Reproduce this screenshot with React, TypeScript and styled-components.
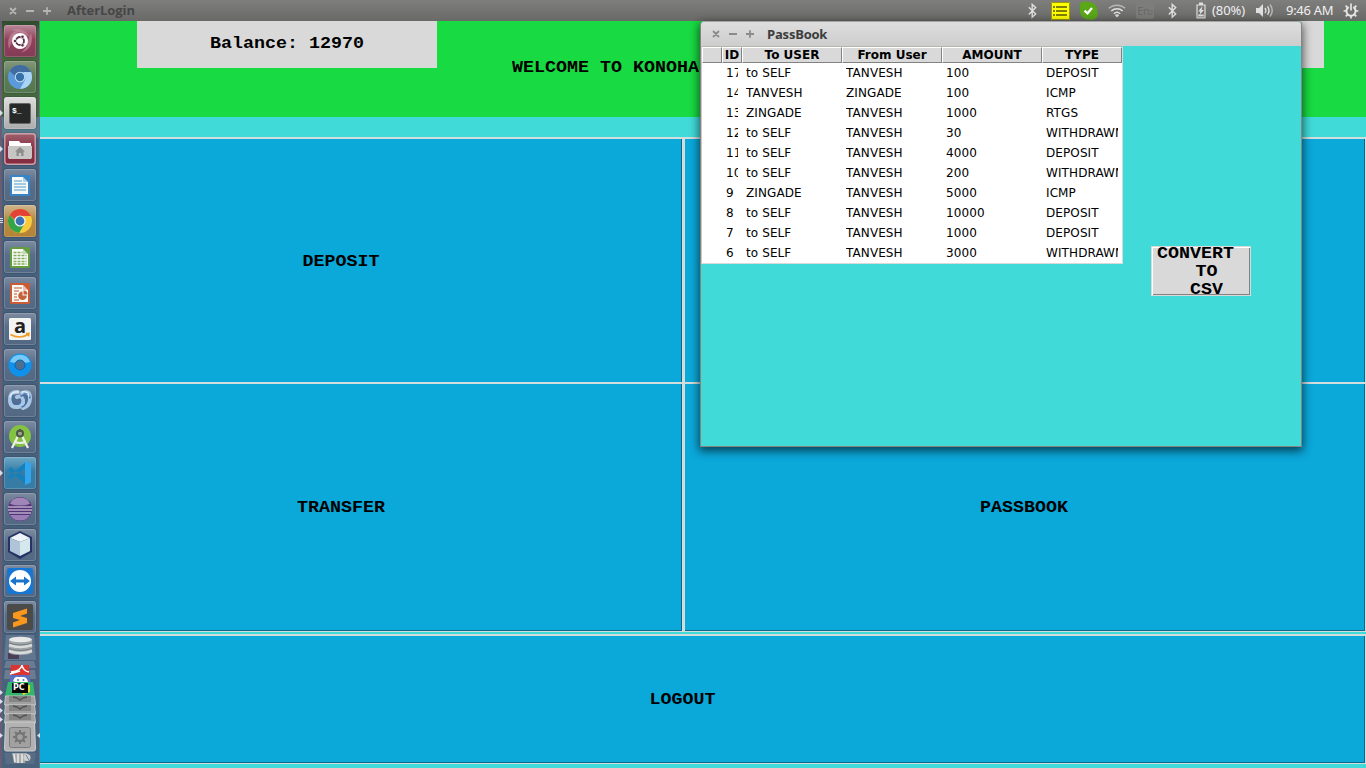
import React from 'react';
import styled, { createGlobalStyle } from 'styled-components';

const GlobalStyle = createGlobalStyle`
  * { box-sizing: border-box; }
  html, body { margin: 0; padding: 0; overflow: hidden; }
`;

const Desktop = styled.div`
  position: relative;
  width: 1366px;
  height: 768px;
  overflow: hidden;
  display: flex;
  flex-direction: column;
  background: #40dad8;
  color: #000;
`;

/* ---------- top panel ---------- */

const Panel = styled.header`
  height: 21px;
  flex: none;
  display: flex;
  align-items: center;
  background: linear-gradient(#7e7e7d, #696968);
`;

const Controls = styled.div<{ $color: string }>`
  display: flex;
  flex: none;
  color: ${(p) => p.$color};
`;

const PanelTitle = styled.div`
  margin-left: 16px;
  width: 961px;
  font: bold 13px/21px 'Open Sans', 'Noto Sans', sans-serif;
  color: #464646;
  letter-spacing: -0.05px;
`;

const Slot = styled.div<{ $w: number }>`
  width: ${(p) => p.$w}px;
  height: 21px;
  flex: none;
  display: flex;
  align-items: center;
  color: #dfdfdf;
`;

const PanelText = styled.div<{ $w: number; $spacing: number }>`
  width: ${(p) => p.$w}px;
  flex: none;
  white-space: nowrap;
  font: 13px/21px 'Noto Sans', 'Open Sans', sans-serif;
  letter-spacing: ${(p) => p.$spacing}px;
  color: #f0f0f0;
`;

function WindowControls({ color }: { color: string }) {
  return (
    <Controls $color={color}>
      <svg width="42" height="10" viewBox="0 0 42 10" fill="none" stroke="currentColor" strokeWidth="1.8">
        <path d="M1 2l6 6M7 2l-6 6M17 5h8M34 5h8M38 1.2v7.6" />
      </svg>
    </Controls>
  );
}

function Bluetooth() {
  return (
    <svg width="9" height="16" viewBox="0 0 9 16" fill="none" stroke="currentColor" strokeWidth="1.4">
      <path d="M.8 4.3l6.9 6.6-3.5 3.3V1.4l3.5 3.2L.8 11.4" />
    </svg>
  );
}

const InputSource = styled.span`
  width: 18px;
  height: 17px;
  border-radius: 2px;
  background: #7d7d7c;
  color: #686868;
  font: 11px/17px 'Noto Sans', sans-serif;
  text-align: center;
  white-space: nowrap;
  letter-spacing: -0.5px;
  small { font-size: 7px; }
`;

function Indicators() {
  return (
    <>
      <Slot $w={23}><Bluetooth /></Slot>
      <Slot $w={28}>
        <svg width="19" height="18" viewBox="0 0 19 18">
          <path fill="#ffff00" d="M0 0h19v18H0z" />
          <path fill="none" stroke="#9a9a10" d="M.5.5h18v17H.5z" />
          <path stroke="#55550a" strokeWidth="1.6" d="M2 5h2M5 5h11M2 9h2M5 9h11M2 13h2M5 13h11" />
        </svg>
      </Slot>
      <Slot $w={29}>
        <svg width="19" height="19" viewBox="0 0 19 19">
          <path fill="#5aa718" d="M4 .5c2-1 4 .4 6 .4 5 0 8.500 4 8.300 8.400 0 2 1 4-.1 6.200-1.700 3.500-5 4-8 3C5 19 1 15 1 10 1 7-1 3 4 .5z" />
          <path fill="none" stroke="#fff" strokeWidth="2.2" d="M5.500 9.600l3 2.700L13 7" />
        </svg>
      </Slot>
      <Slot $w={28}>
        <svg width="18" height="15" viewBox="0 0 18 15" fill="none" stroke="currentColor" strokeWidth="1.5">
          <path opacity=".6" d="M.8 5.300c4.500-4.200 11.900-4.200 16.400 0" />
          <path d="M3.300 8c3.300-3 8.100-3 11.400 0" />
          <path d="M5.800 10.700c1.900-1.700 4.500-1.700 6.400 0" />
          <path fill="currentColor" stroke="none" d="M6.800 12.100q2.200-1.500 4.400 0L9 14.500z" />
        </svg>
      </Slot>
      <Slot $w={32}><InputSource>En<small>2</small></InputSource></Slot>
      <Slot $w={28}><Bluetooth /></Slot>
      <Slot $w={16}>
        <svg width="10" height="17" viewBox="0 0 10 17">
          <path fill="none" stroke="currentColor" strokeWidth="1.200" d="M1 3h8v12.800H1z" />
          <path fill="currentColor" d="M3 .5h4V3H3zM2.200 12.500h5.600v2H2.200z" />
          <path fill="currentColor" d="M6.500 4L2.200 9.600h2.100L3.500 13 8 7.900H5.700z" />
        </svg>
      </Slot>
      <PanelText $w={44} $spacing={-0.1}>(80%)</PanelText>
      <Slot $w={30}>
        <svg width="18" height="15" viewBox="0 0 18 15" fill="none" stroke="currentColor" strokeWidth="1.400">
          <path fill="currentColor" stroke="none" d="M0 5h3l4-4v13l-4-4H0z" />
          <path d="M9 5q1.800 2.500 0 5" />
          <path d="M11.500 3.300q3 4.200 0 8.400" />
          <path opacity=".65" d="M14 1.500q4.500 6 0 12" />
        </svg>
      </Slot>
      <PanelText $w={57} $spacing={-0.3}>9:46 AM</PanelText>
      <Slot $w={18}>
        <svg width="16" height="16" viewBox="0 0 16 16" fill="none" stroke="#e6e6e6">
          <path strokeWidth="2" d="M5.700 4.100a4.600 4.600 0 1 0 4.600 0" />
          <path strokeWidth="1.700" d="M8 .5v7M.6 8h3M12.400 8h3M8 12.500v3M2.600 2.700l2 2M13.400 2.700l-2 2M2.700 13.400l2-2M13.300 13.400l-2-2" />
        </svg>
      </Slot>
    </>
  );
}

/* ---------- banking window ---------- */

const mono = `bold 18.33px/20px 'Liberation Mono', monospace`;

const Squat = styled.span`
  display: inline-block;
  white-space: pre;
  font: ${mono};
  transform: scaleY(0.88);
`;

const Banner = styled.section`
  height: 96px;
  flex: none;
  display: grid;
  grid-template-columns: 300px 587px 300px;
  padding-left: 137px;
  background: #18da43;
`;

const InfoBox = styled.div`
  height: 47px;
  background: #d9d9d9;
  display: flex;
  align-items: center;
  justify-content: center;
  padding-bottom: 1px;
`;

const Welcome = styled.div`
  padding: 37px 0 0 75px;
`;

const ButtonGrid = styled.main`
  margin-top: 20px;
  height: 495px;
  flex: none;
  display: grid;
  grid-template-columns: 683px 683px;
  grid-template-rows: 245px 250px;
`;

const MenuButton = styled.button<{ $lower?: boolean }>`
  appearance: none;
  margin: 0;
  padding: ${(p) => (p.$lower ? '0' : '2px')} 2px 0 0;
  border-radius: 0;
  border-style: solid;
  border-color: #d3dddd;
  border-width: 2px 1px ${(p) => (p.$lower ? 1 : 0)}px 2px;
  background: #0ba8da;
  box-shadow: inset -1px ${(p) => (p.$lower ? -1 : 0)}px #08698b;
  color: #000;
`;

const LogoutButton = styled(MenuButton)`
  margin-top: 2px;
  height: 130px;
  flex: none;
`;

/* ---------- launcher ---------- */

const Launcher = styled.nav`
  position: absolute;
  left: 0;
  top: 21px;
  width: 40px;
  height: 747px;
  padding-top: 4px;
  display: flex;
  flex-direction: column;
  align-items: center;
  gap: 4px;
  border-left: 2px solid #695d74;
  border-right: 1px solid #5b7489;
  background: linear-gradient(#2e4a2c 0, #47693e 12px, #47693e 96px, #577e8e 96px, #577e8e 116px, #48627d 118px, #48627d 100%);
`;

const Tile = styled.div<{ $bg?: string }>`
  width: 32px;
  height: 32px;
  margin-left: -1px;
  flex: none;
  border-radius: 3px;
  position: relative;
  background: ${(p) => p.$bg || 'linear-gradient(#7c8ba0, #586d88 45%, #536883)'};
  box-shadow: inset 0 0 0 1px rgba(255, 255, 255, 0.17), 0 0 2px rgba(20, 30, 45, 0.6);
  svg { display: block; }
`;

const Pip = styled.i`
  position: absolute;
  left: -4px;
  top: 13px;
  border: 3px solid transparent;
  border-left-color: #d5e1e9;
  border-right: 0;
`;

const PipBars = styled.i`
  position: absolute;
  left: -4px;
  top: 13px;
  width: 3px;
  height: 5px;
  border: solid #d5e1e9;
  border-width: 1px 0;
  background: linear-gradient(transparent 1px, #d5e1e9 1px, #d5e1e9 2px, transparent 2px);
`;

const Stack = styled.div`
  width: 40px;
  height: 135px;
  margin: -4px -1px 0 -2px;
  flex: none;
`;

function DocIcon({ color, children }: { color: string; children: React.ReactNode }) {
  return (
    <>
      <rect x="6" y="6" width="20" height="21" rx="1.500" fill={color} />
      <path fill="#f8f8f5" d="M8 8h11l5 5v12H8z" />
      <path fill={color} opacity=".35" d="M19 8l5 5h-5z" />
      {children}
    </>
  );
}

type LauncherApp = { name: string; bg?: string; running?: 'one' | 'many'; art: React.ReactNode };

const apps: LauncherApp[] = [
  {
    name: 'dash',
    bg: 'linear-gradient(#b98a98, #91405c 45%, #843c56)',
    art: (
      <>
        <path fill="#c28a9c" opacity=".7" d="M5 24Q1 8 16 5q-7 5-8 11zM27 8q4 15-10 20 7-6 7-12zM8 5q11-4 19 8-6-5-13-6z" />
        <circle cx="16" cy="16" r="8" fill="#fff" />
        <circle cx="16" cy="16" r="4" fill="none" stroke="#5b3047" strokeWidth="1.800" />
        <g fill="#5b3047" stroke="#fff" strokeWidth=".7">
          <circle cx="11" cy="16" r="1.700" /><circle cx="18.500" cy="11.800" r="1.700" /><circle cx="18.500" cy="20.200" r="1.700" />
        </g>
      </>
    ),
  },
  {
    name: 'chromium',
    bg: 'linear-gradient(#84977a, #5b7b57 50%, #547650)',
    art: (
      <>
        <circle cx="16" cy="16" r="12" fill="#5a9ada" />
        <path fill="#416c9f" d="M5.600 10A12 12 0 0 1 27 11H16a5 5 0 0 0-5 4z" />
        <path fill="#a9d4f6" d="M27 11a12 12 0 0 1-11 17l5-9q1-5-2-8z" />
        <circle cx="16" cy="16" r="5.200" fill="#cbdced" /><circle cx="16" cy="16" r="4.200" fill="#3670a9" />
      </>
    ),
  },
  {
    name: 'terminal',
    bg: 'linear-gradient(#ddd, #adadad)',
    running: 'one',
    art: (
      <>
        <rect x="5.500" y="6.500" width="21" height="20" rx="1.500" fill="#272929" stroke="#666" />
        <text x="8" y="16" fill="#fff" fontFamily="Liberation Mono" fontWeight="bold" fontSize="8">$_</text>
      </>
    ),
  },
  {
    name: 'files',
    bg: 'linear-gradient(#9f626e, #892f43 50%, #862b40)',
    running: 'one',
    art: (
      <>
        <rect x=".8" y=".8" width="30.400" height="30.400" rx="3" fill="none" stroke="#cba1aa" strokeWidth="1.400" />
        <path fill="#fff" d="M5 8h10l1.500 2H27v16H5z" />
        <path fill="#c6c6c4" d="M4 13h24v11q0 2-2 2H6q-2 0-2-2z" />
        <path fill="#8d8d8b" d="M16 14l5 4.500h-1.500V23h-2.300v-3h-2.400v3h-2.300v-4.500H11z" />
      </>
    ),
  },
  { name: 'writer', art: <DocIcon color="#3784c9"><path stroke="#4b9bd6" strokeWidth="1.200" d="M10 12h8M10 15h12M10 18h12M10 21h12" /></DocIcon> },
  {
    name: 'chrome',
    bg: 'linear-gradient(#cfb78e, #b58b45 45%, #b58336)',
    running: 'many',
    art: (
      <>
        <circle cx="16" cy="16" r="12" fill="#f8ca3c" />
        <path fill="#e34336" d="M5.600 10A12 12 0 0 1 27 11H16a5 5 0 0 0-5 4z" />
        <path fill="#33a447" d="M5.600 10a12 12 0 0 0 9.500 18l5-8.500q-6 2-9-3.500z" />
        <circle cx="16" cy="16" r="5.600" fill="#f5f5f5" /><circle cx="16" cy="16" r="4.400" fill="#3973b4" />
      </>
    ),
  },
  { name: 'calc', art: <DocIcon color="#649c40"><path stroke="#80ae5b" strokeWidth="1.500" strokeDasharray="3 1" d="M9.500 11.500h9M9.500 14.500h13M9.500 17.500h13M9.500 20.500h13M9.500 23h13" /></DocIcon> },
  { name: 'impress', art: <DocIcon color="#cb5b35"><path stroke="#d58b6e" strokeWidth="1.300" d="M10 11h8M10 14h5M10 17h3M10 20h3M10 23h5" /><circle cx="18.500" cy="18.800" r="4.300" fill="#c4623d" /><path fill="#f8f8f5" d="M18.500 18.500v-5h5v5z" /><path fill="#ca6138" d="M19.500 13.500a4 4 0 0 1 4 4h-4z" /></DocIcon> },
  {
    name: 'amazon',
    art: (
      <>
        <rect x="5" y="5" width="22" height="22" rx="1.500" fill="#f4f4f2" />
        <text x="10" y="20" fill="#222" fontFamily="Open Sans" fontWeight="bold" fontSize="20">a</text>
        <path fill="none" stroke="#f59a22" strokeWidth="1.600" d="M6.500 21.500q9 5 17.500 0M22 20.500l3-.2-.5 3" />
      </>
    ),
  },
  {
    name: 'sync',
    art: (
      <>
        <circle cx="16" cy="16" r="8.300" fill="none" stroke="#0e92ec" strokeWidth="6.500" />
        <path fill="#9bdcfb" opacity=".75" d="M6 13a10.500 10.500 0 0 1 20 0l-5 1q-5-6-10 0z" />
        <circle cx="16" cy="16" r="5" fill="#4b6e91" stroke="#0868b5" />
      </>
    ),
  },
  {
    name: 'swirl',
    art: (
      <g fill="none" strokeLinecap="round">
        <path stroke="#a9c6e3" strokeWidth="4" d="M18 8q8-3 8 5t-7 10M14 7q-8-1-8 8 0 8 8 7 6-1 5-7-2-5-6-3" />
        <path stroke="#3f70ad" strokeWidth="1.400" d="M17 11q6-3 6 3t-5 8M9 10q-3 9 5 9 4-2 2-5M20 8q6-1 6 5" />
        <path stroke="#e7f1fa" strokeWidth="1.300" d="M6 12q2-6 8-5M18 7q7-1 7 4" />
      </g>
    ),
  },
  {
    name: 'android-studio',
    art: (
      <>
        <circle cx="16" cy="15" r="11" fill="#83c341" />
        <path fill="none" stroke="#eee" strokeWidth="2.200" d="M14.500 14L8 27M17.500 14L24 27M10 20.500q6 3 12 0" />
        <circle cx="16" cy="12.500" r="3" fill="#9ba88d" stroke="#4b5548" strokeWidth="2" />
        <path stroke="#555" strokeWidth="2" d="M16 8v3" />
      </>
    ),
  },
  {
    name: 'code',
    bg: 'linear-gradient(#6da7c4, #367da5 45%, #367ca5)',
    running: 'one',
    art: (
      <>
        <path fill="#1480bd" d="M4 12.500L6.500 10 22 21v6zM4 19.500L6.500 22 22 11V5z" />
        <path fill="#31a5ee" d="M21 4l6 2.500v19L21 28z" />
      </>
    ),
  },
  {
    name: 'eclipse',
    art: (
      <>
        <circle cx="16" cy="16" r="12" fill="#533278" />
        <path fill="#b9a2cc" opacity=".75" d="M6 11Q8 4.500 16 4.500T26 11q-10 3-20 0z" />
        <path fill="#9b7db5" d="M6 22h20q-3 5.500-10 5.500T6 22z" />
        <path stroke="#ede8f3" strokeWidth="1.200" d="M4 14h24M4 17h24M5 20h22" />
      </>
    ),
  },
  {
    name: 'cube',
    art: (
      <>
        <path fill="#263364" d="M16 2l12 6v15l-12 7-12-7V8z" />
        <path fill="#edf5f8" d="M16 4l10 5-10 4L6 9z" /><path fill="#afc4d9" d="M6 9l10 4v14L6 22z" /><path fill="#d4e8ed" d="M26 9l-10 4v14l10-5z" />
      </>
    ),
  },
  {
    name: 'remote',
    art: (
      <>
        <rect x="3" y="3" width="26" height="26" rx="2" fill="#1776d2" />
        <circle cx="16" cy="16" r="11" fill="#fff" />
        <path fill="#1a74c9" d="M6 16l6-4.500v3h8v-3l6 4.500-6 4.500v-3h-8v3z" />
      </>
    ),
  },
  {
    name: 'sublime',
    art: (
      <>
        <rect x="3" y="3" width="26" height="26" rx="2" fill="#4b4b49" />
        <path fill="#fa981e" d="M9 12l14-4.500v5L16 15l7 2v5L9 26.500v-5l7-2.500-7-2z" />
      </>
    ),
  },
];

function FoldedApps() {
  return (
    <svg width="40" height="135" viewBox="0 633 40 135" style={{ display: 'block' }}>
      <path fill="#63768f" d="M6 635h28l2 25H4z" />
      <path fill="#4d3e58" d="M8 653h11v6H8z" />
      <path fill="#9fa5a8" d="M9 640v12q0 3 11 3t12-3v-12z" />
      <path stroke="#d9dbdc" strokeWidth="2.600" fill="none" d="M9 645q11 4 23 0M9 651q11 4 23 0" />
      <path stroke="#747b80" strokeWidth="1" fill="none" d="M9 643q11 4 23 0M9 648.500q11 4 23 0" />
      <ellipse cx="20.500" cy="639.500" rx="11.500" ry="2.800" fill="#e7e8e8" />
      <path fill="#6a7b92" d="M6 661h28l2 7H4zM5 670h30l1 9H4z" />
      <path fill="#d93532" d="M11 665h18l1 10H10z" />
      <path stroke="#fff" strokeWidth="1.500" fill="none" d="M11 672q10-1 11-7 1 6 7 7M10 674l10-3" />
      <path fill="#586fc2" d="M11 675h18l2 9H9z" />
      <path fill="#fff" d="M13 681q2-5 5-4h5q4 0 5 5l-4 1-3-1-4 1z" />
      <circle cx="18" cy="680" r="1" fill="#586fc2" /><circle cx="23.500" cy="680" r="1" fill="#586fc2" />
      <path fill="#34b46c" d="M8 682h25l2 14H5z" />
      <path fill="#e5df35" d="M20 686l10-1v7l-7 3z" />
      <path fill="#050505" d="M12 683h16v10H12z" />
      <text x="13" y="690" fill="#fff" fontFamily="DejaVu Sans" fontWeight="bold" fontSize="8">PC</text>
      {[696, 705, 714].map((y) => (
        <g key={y}>
          <path fill="#a1a1a1" stroke="#c2c2c2" d={`M5.500 ${y}h29l1 9h-31z`} />
          <path fill="#858585" d={`M9 ${y}h22v6H9z`} />
          <path fill="none" stroke="#555" strokeWidth="1.600" d={`M13 ${y + 1}l4 1q3 3 6 0l4-1M20 ${y + 3}v2`} />
        </g>
      ))}
      <path fill="#b2b2b2" stroke="#cecece" d="M5.500 722h29l1 27q0 2-2 2h-27q-2 0-2-2z" />
      <rect x="9.500" y="727.500" width="21" height="20" rx="2" fill="#a1a1a1" stroke="#7b7b7b" />
      <g transform="translate(20 737)" fill="none" stroke="#757575">
        <circle r="4" strokeWidth="2.300" />
        <path strokeWidth="2" d="M0-7v3M0 4v3M-7 0h3M4 0h3M-5-5l2 2M5-5l-2 2M-5 5l2-2M5 5L3 3" />
      </g>
      <path fill="#586c84" d="M4 753h32l-2 11H6z" />
      <path fill="#aaacae" d="M12 753h15l-2 10H14z" />
      <path stroke="#e9e9e9" strokeWidth="1.500" d="M14 754l1 8M18 754v9M22 754v9" />
      <circle cx="27" cy="757.500" r="3.500" fill="#cdd1d4" /><path stroke="#77818b" d="M26 755l3 5" />
      <path fill="#d9e2e8" d="M0 690l3 2.500-3 2.500zM0 699l3 2.500-3 2.500zM0 708l3 2.500-3 2.500zM0 717l3 2.500-3 2.500zM0 733l3 2.500-3 2.500zM40 733l-3 2.500 3 2.500z" />
    </svg>
  );
}

/* ---------- passbook window ---------- */

const Window = styled.section`
  position: absolute;
  left: 700px;
  top: 21px;
  width: 602px;
  height: 426px;
  display: flex;
  flex-direction: column;
  border: 1px solid #888380;
  border-top-color: #a5a5a5;
  border-radius: 4px 4px 0 0;
  background: #40dad8;
  box-shadow: 0 3px 10px 1px rgba(0, 0, 0, 0.62);
`;

const TitleBar = styled.div`
  height: 24px;
  flex: none;
  display: flex;
  align-items: center;
  padding-left: 11px;
  border-radius: 3px 3px 0 0;
  background: linear-gradient(#dedede, #cdcdcd);
`;

const WindowTitle = styled.div`
  margin-left: 13px;
  font: bold 13px/24px 'Open Sans', 'Noto Sans', sans-serif;
  letter-spacing: -0.2px;
  color: #3c3c3c;
`;

const WindowBody = styled.div`
  display: flex;
  align-items: flex-start;
  flex: 1;
`;

const Table = styled.div`
  width: 422px;
  height: 218px;
  border: 1px solid #d9d9d9;
  border-top-color: #b5b5ac;
  border-left-color: #c8c8c8;
  background: #fff;
`;

const Row = styled.div`
  display: grid;
  grid-template-columns: 20px 20px 100px 100px 100px 80px;
`;

const HeadCell = styled.div`
  height: 16px;
  background: #d9d9d9;
  border: solid;
  border-width: 1px;
  border-color: #fff #828282 #828282 #fff;
  text-align: center;
  white-space: nowrap;
  overflow: hidden;
  font: bold 12px/15px 'DejaVu Sans', sans-serif;
`;

const Cell = styled.div`
  height: 20px;
  margin: 0 4px;
  overflow: hidden;
  white-space: nowrap;
  font: 12px/20px 'DejaVu Sans', sans-serif;
  letter-spacing: 0.1px;
`;

const ConvertButton = styled.button`
  appearance: none;
  margin: 200px 0 0 28px;
  width: 100px;
  height: 50px;
  padding: 2px 0 0;
  display: flex;
  flex-direction: column;
  align-items: center;
  justify-content: center;
  border: 1px solid #d9d9d9;
  border-radius: 0;
  background: #d9d9d9;
  box-shadow: inset 1px 1px #fff, inset -1px -1px #828282;
  color: #000;
  ${Squat} { line-height: 18px; }
`;

const rows = [
  ['17', 'to SELF', 'TANVESH', '100', 'DEPOSIT'],
  ['14', 'TANVESH', 'ZINGADE', '100', 'ICMP'],
  ['13', 'ZINGADE', 'TANVESH', '1000', 'RTGS'],
  ['12', 'to SELF', 'TANVESH', '30', 'WITHDRAWN'],
  ['11', 'to SELF', 'TANVESH', '4000', 'DEPOSIT'],
  ['10', 'to SELF', 'TANVESH', '200', 'WITHDRAWN'],
  ['9', 'ZINGADE', 'TANVESH', '5000', 'ICMP'],
  ['8', 'to SELF', 'TANVESH', '10000', 'DEPOSIT'],
  ['7', 'to SELF', 'TANVESH', '1000', 'DEPOSIT'],
  ['6', 'to SELF', 'TANVESH', '3000', 'WITHDRAWN'],
];

const PanelLead = styled.div`
  width: 9px;
  flex: none;
`;

export default function App() {
  return (
    <Desktop>
      <GlobalStyle />
      <Panel>
        <PanelLead />
        <WindowControls color="#b4b4b2" />
        <PanelTitle>AfterLogin</PanelTitle>
        <Indicators />
      </Panel>
      <Banner>
        <InfoBox><Squat>Balance: 12970</Squat></InfoBox>
        <Welcome><Squat>WELCOME TO KONOHA</Squat></Welcome>
        <InfoBox />
      </Banner>
      <ButtonGrid>
        <MenuButton><Squat>DEPOSIT</Squat></MenuButton>
        <MenuButton />
        <MenuButton $lower><Squat>TRANSFER</Squat></MenuButton>
        <MenuButton $lower><Squat>PASSBOOK</Squat></MenuButton>
      </ButtonGrid>
      <LogoutButton $lower><Squat>LOGOUT</Squat></LogoutButton>

      <Launcher>
        {apps.map((app) => (
          <Tile key={app.name} $bg={app.bg}>
            {app.running === 'one' && <Pip />}
            {app.running === 'many' && <PipBars />}
            <svg width="32" height="32" viewBox="0 0 32 32">{app.art}</svg>
          </Tile>
        ))}
        <Stack><FoldedApps /></Stack>
      </Launcher>

      <Window>
        <TitleBar>
          <WindowControls color="#8b8b8b" />
          <WindowTitle>PassBook</WindowTitle>
        </TitleBar>
        <WindowBody>
          <Table>
            <Row>
              {['', 'ID', 'To USER', 'From User', 'AMOUNT', 'TYPE'].map((h) => <HeadCell key={h}>{h}</HeadCell>)}
            </Row>
            {rows.map((r) => (
              <Row key={r[0]}>
                <Cell />
                {r.map((v, i) => <Cell key={i}>{v}</Cell>)}
              </Row>
            ))}
          </Table>
          <ConvertButton>
            <Squat>{'CONVERT '}</Squat>
            <Squat>{' TO'}</Squat>
            <Squat>{' CSV'}</Squat>
          </ConvertButton>
        </WindowBody>
      </Window>
    </Desktop>
  );
}
